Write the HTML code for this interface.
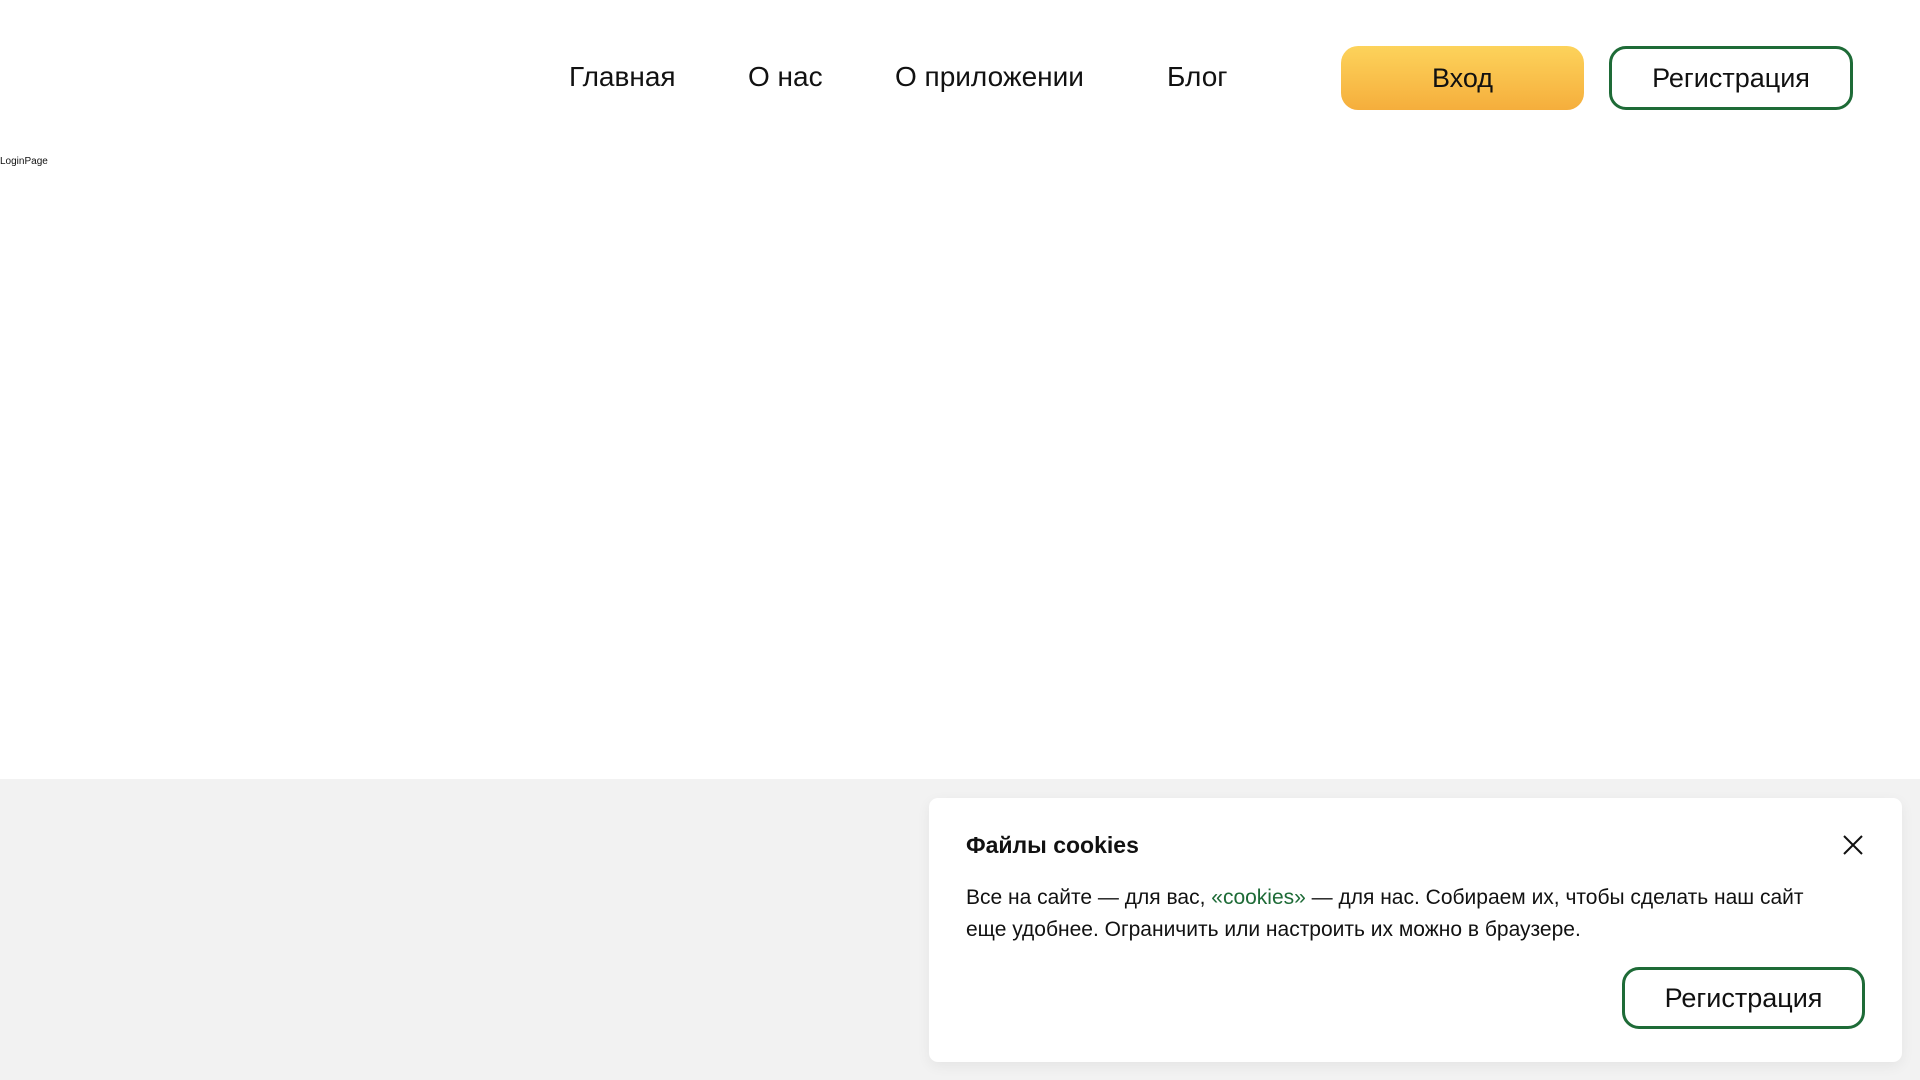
<!DOCTYPE html>
<html><head><meta charset="utf-8"><style>
*{margin:0;padding:0;box-sizing:border-box}
body{width:1920px;height:1080px;position:relative;background:#fff;font-family:"Liberation Sans",sans-serif;color:#111;overflow:hidden}
.nav{position:absolute;top:61px;font-size:28px;line-height:32px}
.btn{position:absolute;display:flex;align-items:center;justify-content:center;font-size:27px;border-radius:17px}
.y{background:linear-gradient(#fdd35b,#f5ae3c);left:1341px;top:46px;width:243px;height:64px}
.g{border:3px solid #1e6b37;background:#fff}
.gray{position:absolute;left:0;top:779px;width:1920px;height:301px;background:#f2f2f2}
.card{position:absolute;left:929px;top:798px;width:973px;height:264px;background:#fff;border-radius:9px;box-shadow:0 4px 14px rgba(0,0,0,.06)}
</style></head><body>
<div class="nav" style="left:569px">Главная</div>
<div class="nav" style="left:748px">О нас</div>
<div class="nav" style="left:895px">О приложении</div>
<div class="nav" style="left:1167px">Блог</div>
<div class="btn y">Вход</div>
<div class="btn g" style="left:1609px;top:46px;width:244px;height:64px">Регистрация</div>
<div style="position:absolute;left:0;top:156px;font-size:10px">LoginPage</div>
<div class="gray"></div>
<div class="card">
<div style="position:absolute;left:37px;top:34px;font-size:23px;font-weight:bold">Файлы cookies</div>
<svg style="position:absolute;left:914px;top:37px" width="20" height="20" viewBox="0 0 20 20"><path d="M1 1L19 19M19 1L1 19" stroke="#111" stroke-width="2"/></svg>
<div style="position:absolute;left:37px;top:84px;width:870px;font-size:21px;line-height:32px">Все на сайте — для вас, <span style="color:#1e6b37">«cookies»</span> — для нас. Собираем их, чтобы сделать наш сайт еще удобнее. Ограничить или настроить их можно в браузере.</div>
<div class="btn g" style="left:693px;top:169px;width:243px;height:62px">Регистрация</div>
</div>
</body></html>
